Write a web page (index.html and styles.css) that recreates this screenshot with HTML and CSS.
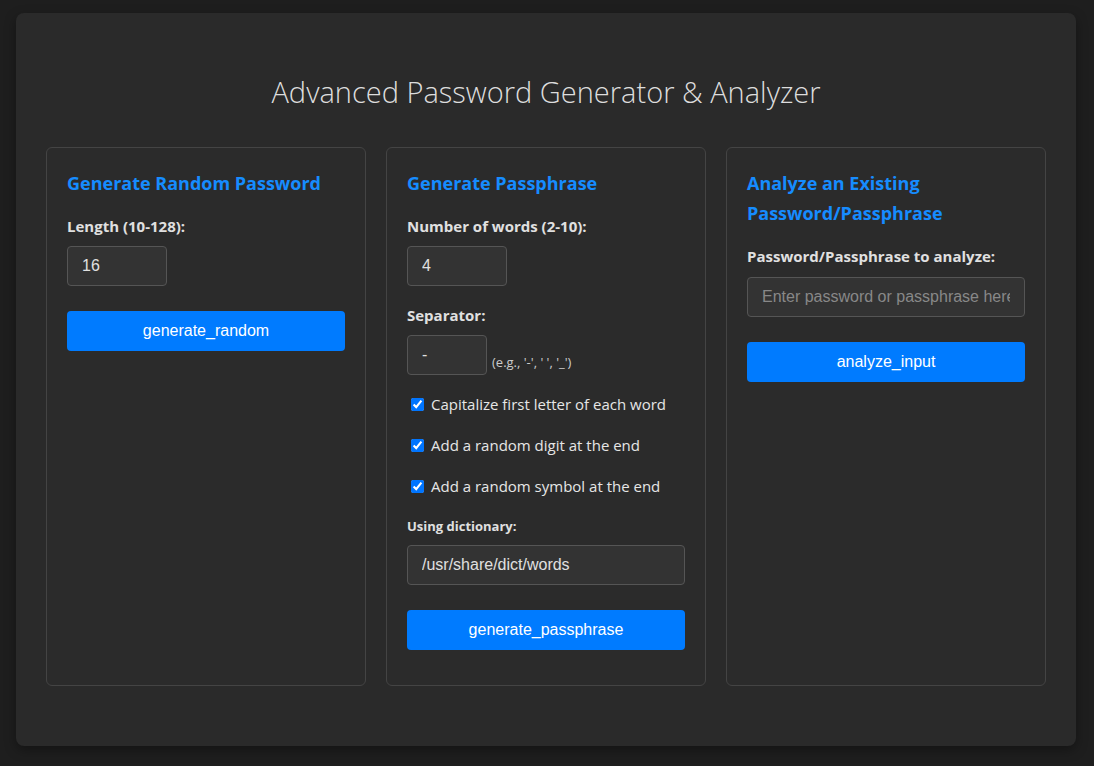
FILE: index.html
```html
<!DOCTYPE html>
<html lang="en">
<head>
<meta charset="utf-8">
<title>Advanced Password Generator &amp; Analyzer</title>
<link rel="stylesheet" href="styles.css">
</head>
<body>
<div class="container">
  <h1 class="title">Advanced Password Generator &amp; Analyzer</h1>
  <div class="cards">
    <section class="card">
      <h2 class="card-title">Generate Random Password</h2>
      <div class="group">
        <label class="label" for="len">Length (10-128):</label>
        <input class="input input-short" id="len" type="text" value="16">
      </div>
      <button class="btn">generate_random</button>
    </section>
    <section class="card">
      <h2 class="card-title">Generate Passphrase</h2>
      <div class="group">
        <label class="label" for="words">Number of words (2-10):</label>
        <input class="input input-short" id="words" type="text" value="4">
      </div>
      <div class="group">
        <label class="label" for="sep">Separator:</label>
        <div class="sep-row">
          <input class="input input-sep" id="sep" type="text" value="-">
          <span class="hint">(e.g., '-', ' ', '_')</span>
        </div>
      </div>
      <label class="check"><input type="checkbox" checked><span>Capitalize first letter of each word</span></label>
      <label class="check"><input type="checkbox" checked><span>Add a random digit at the end</span></label>
      <label class="check"><input type="checkbox" checked><span>Add a random symbol at the end</span></label>
      <div class="group">
        <label class="label label-small" for="dict">Using dictionary:</label>
        <input class="input input-full" id="dict" type="text" value="/usr/share/dict/words">
      </div>
      <button class="btn">generate_passphrase</button>
    </section>
    <section class="card">
      <h2 class="card-title">Analyze an Existing Password/Passphrase</h2>
      <div class="group">
        <label class="label label-tall" for="an">Password/Passphrase to analyze:</label>
        <input class="input input-full" id="an" type="text" placeholder="Enter password or passphrase here">
      </div>
      <button class="btn">analyze_input</button>
    </section>
  </div>
</div>
</body>
</html>
```
FILE: styles.css
```css
* { box-sizing: border-box; }
html, body { margin: 0; padding: 0; }
body {
  background: #1e1e1e;
  font-family: "Open Sans", "Noto Sans", sans-serif;
  color: #e0e0e0;
  padding: 13px 18px 20px 16px;
}
.container {
  background: #2a2a2a;
  border-radius: 8px;
  box-shadow: 0 4px 12px rgba(0,0,0,0.35);
  padding: 30px;
}
.title {
  margin: 31px 0 37px;
  font-size: 29px;
  line-height: 36px;
  font-weight: 300;
  text-align: center;
  color: #dddddd;
}
.cards {
  display: grid;
  grid-template-columns: repeat(3, 1fr);
  gap: 20px;
  margin-bottom: 30px;
}
.card {
  border: 1px solid #444;
  border-radius: 6px;
  padding: 20px;
  min-height: 539px;
  background: #2b2b2b;
}
.card-title {
  margin: 0 0 18px;
  font-size: 18px;
  line-height: 30px;
  font-weight: 700;
  color: #168cff;
}
.group { margin-bottom: 19px; }
.label {
  display: block;
  font-size: 15px;
  line-height: 20px;
  font-weight: 700;
  color: #e0e0e0;
  margin-bottom: 10px;
}
.label-tall { margin-bottom: 11px; }
.label-small {
  font-size: 13px;
  line-height: 18px;
}
.input {
  display: block;
  height: 40px;
  padding: 0 14px;
  background: #333;
  border: 1px solid #555;
  border-radius: 4px;
  color: #e0e0e0;
  font-family: "Liberation Sans", Arial, sans-serif;
  font-size: 16px;
  outline: none;
}
.input::placeholder { color: #888; }
.input-short { width: 100px; }
.input-sep { width: 80px; }
.input-full { width: 100%; }
.sep-row {
  display: flex;
  align-items: flex-end;
  gap: 5px;
}
.hint {
  font-size: 13px;
  line-height: 16px;
  color: #ccc;
  padding-bottom: 5px;
}
.check {
  display: flex;
  align-items: center;
  height: 20px;
  margin-bottom: 21px;
  font-size: 15px;
  color: #e6e6e6;
}
.check input {
  width: 13px;
  height: 13px;
  margin: 0 7px 0 4px;
}
.btn {
  display: block;
  width: 100%;
  height: 40px;
  margin-top: 25px;
  border: none;
  border-radius: 4px;
  background: #007bff;
  color: #fff;
  font-family: "Liberation Sans", Arial, sans-serif;
  font-size: 16px;
}
.group:has(+ .btn) { margin-bottom: 0; }
```
